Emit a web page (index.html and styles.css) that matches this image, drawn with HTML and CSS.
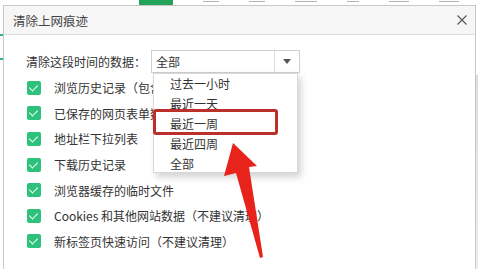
FILE: index.html
```html
<!DOCTYPE html>
<html lang="zh-CN">
<head>
    <meta charset="UTF-8">
    <title>清除上网痕迹</title>
    <link rel="stylesheet" href="styles.css">
</head>
<body>
    <div class="topbar">
        <span class="tab-green"></span>
        <span class="dash" style="width: 16px"></span>
        <span class="dash" style="width: 16px"></span>
        <span class="dash" style="width: 22px"></span>
        <span class="dash" style="width: 12px"></span>
        <span class="dash" style="width: 20px"></span>
        <span class="dash" style="width: 20px"></span>
    </div>

    <div class="stage">
        <div class="side-left">
            <span class="mark"></span>
            <span class="mark"></span>
        </div>

        <div class="dialog">
            <div class="title-bar">
                <span class="title">清除上网痕迹</span>
                <svg class="close" width="10" height="10" viewBox="0 0 10 10">
                    <path d="M0.5 0.5 L9.5 9.5 M9.5 0.5 L0.5 9.5" stroke="#555" stroke-width="1.1" fill="none"/>
                </svg>
            </div>

            <div class="content">
                <div class="range-row">
                    <span class="range-label">清除这段时间的数据：</span>
                    <div class="select">
                        <span class="select-value">全部</span>
                        <span class="select-btn">
                            <svg width="8" height="5" viewBox="0 0 8 5"><path d="M0 0 L8 0 L4 5 Z" fill="#555"/></svg>
                        </span>
                        <ul class="dropdown">
                            <li>过去一小时</li>
                            <li>最近一天</li>
                            <li>最近一周</li>
                            <li>最近四周</li>
                            <li>全部</li>
                            <span class="highlight"></span>
                        </ul>
                    </div>
                </div>

                <ul class="options">
                    <li><span class="check"></span>浏览历史记录（包含历史记录和访问记录）</li>
                    <li><span class="check"></span>已保存的网页表单数据</li>
                    <li><span class="check"></span>地址栏下拉列表</li>
                    <li><span class="check"></span>下载历史记录</li>
                    <li><span class="check"></span>浏览器缓存的临时文件</li>
                    <li><span class="check"></span>Cookies 和其他网站数据（不建议清理）</li>
                    <li><span class="check"></span>新标签页快速访问（不建议清理）</li>
                </ul>
            </div>
        </div>
        <div class="side-right"></div>
    </div>

    <!-- annotation arrow -->
    <svg class="arrow" width="478" height="269" viewBox="0 0 478 269">
        <polygon points="233,143 257,166 249,167 263,257 260,258 236,173 224,176" fill="#e8231b"/>
    </svg>
</body>
</html>
```

FILE: styles.css
```css
* {
    box-sizing: border-box;
}
body {
    margin: 0;
    width: 478px;
    height: 269px;
    overflow: hidden;
    background-color: #fff;
    font-family: "Noto Sans CJK SC", "Microsoft YaHei", sans-serif;
    font-size: 12px;
    color: #333;
}
ul {
    list-style: none;
    margin: 0;
    padding: 0;
}

.topbar {
    height: 5px;
    display: flex;
    align-items: flex-start;
    gap: 30px;
}
.tab-green {
    width: 34px;
    height: 6px;
    margin-left: 139px;
    background-color: #21a35a;
}
.dash {
    height: 1px;
    margin-top: 1px;
    background-color: #666;
    opacity: 0.5;
}

.stage {
    display: flex;
    height: 264px;
}
.side-left {
    width: 3px;
    padding-top: 29px;
    display: flex;
    flex-direction: column;
    gap: 22px;
}
.mark {
    height: 2px;
    background-color: #2eb872;
}
.side-right {
    width: 2px;
    background: linear-gradient(#fff 0, #fff 70px, #ddd 70px, #eee 100%);
}

.dialog {
    flex: 1;
    border: 1px solid #c8c8c8;
    border-bottom: none;
    position: relative;
}
.title-bar {
    height: 29px;
    background-color: #f6f6f6;
    border-bottom: 1px solid #dedede;
    display: flex;
    align-items: center;
    justify-content: space-between;
    padding: 0 8px 0 9px;
}
.title {
    color: #444;
    font-size: 12.5px;
}

.content {
    padding: 15px 0 0 23px;
}
.range-row {
    display: flex;
    align-items: center;
    gap: 5px;
    height: 23px;
}
.range-label {
    margin-left: -1px;
}
.select {
    position: relative;
    width: 149px;
    height: 23px;
    border: 1px solid #cfcfcf;
    display: flex;
    align-items: center;
}
.select-value {
    flex: 1;
    padding-left: 4px;
}
.select-btn {
    width: 25px;
    height: 100%;
    border-left: 1px solid #dcdcdc;
    display: flex;
    align-items: center;
    justify-content: center;
}

.dropdown {
    position: absolute;
    top: 22px;
    left: 1px;
    width: 145px;
    height: 100px;
    background-color: #fff;
    border: 1px solid #d8d8d8;
    box-shadow: 3px 4px 7px rgba(0, 0, 0, 0.18);
    z-index: 2;
}
.dropdown li {
    height: 20px;
    line-height: 19px;
    padding-left: 16px;
}
.highlight {
    position: absolute;
    left: -1px;
    top: 35px;
    width: 125px;
    height: 26px;
    border: 3px solid #bd2f2a;
    border-radius: 3px;
}

.options {
    padding-top: 2px;
}
.options li {
    height: 25.6px;
    display: flex;
    align-items: center;
}
.check {
    width: 14px;
    height: 14px;
    margin-right: 13px;
    border-radius: 2px;
    background-color: #2dc27b;
    position: relative;
}
.check::after {
    content: "";
    position: absolute;
    left: 4px;
    top: 2px;
    width: 4px;
    height: 7px;
    border: solid #fff;
    border-width: 0 1.5px 1.5px 0;
    transform: rotate(45deg);
}

.arrow {
    position: absolute;
    top: 0;
    left: 0;
    z-index: 5;
    pointer-events: none;
}
```
